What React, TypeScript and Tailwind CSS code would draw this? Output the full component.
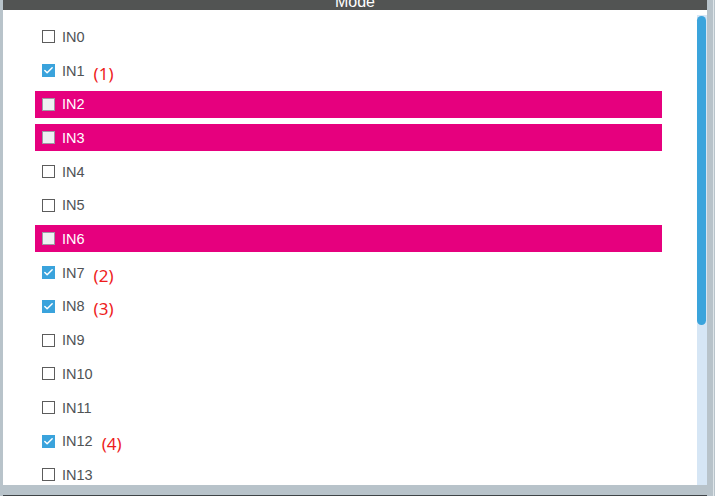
import { Check } from "lucide-react";

type Row = { name: string; checked?: boolean; hl?: boolean; tag?: string };

const rows: Row[] = [
  { name: "IN0" },
  { name: "IN1", checked: true, tag: "(1)" },
  { name: "IN2", hl: true },
  { name: "IN3", hl: true },
  { name: "IN4" },
  { name: "IN5" },
  { name: "IN6", hl: true },
  { name: "IN7", checked: true, tag: "(2)" },
  { name: "IN8", checked: true, tag: "(3)" },
  { name: "IN9" },
  { name: "IN10" },
  { name: "IN11" },
  { name: "IN12", checked: true, tag: "(4)" },
  { name: "IN13" },
];

const Box = ({ checked, hl }: { checked?: boolean; hl?: boolean }) => {
  if (checked) {
    return (
      <div className="flex items-center justify-center w-[13px] h-[13px] bg-[#3aa3dc]">
        <Check size={11} strokeWidth={3.2} color="#ffffff" />
      </div>
    );
  }
  if (hl) {
    return <div className="w-[13px] h-[13px] bg-[#eef0f2] border-[1.5px] border-[#9b9ba3]" />;
  }
  return <div className="w-[13px] h-[13px] bg-white border-[1.5px] border-[#5c5c5c]" />;
};

const App = () => {
  return (
    <div className="relative w-[715px] h-[496px] bg-[#b8c3ca] overflow-hidden font-['Liberation_Sans',Arial,sans-serif]">
      <div className="flex h-full">
        <div className="w-[3px]" />
        <div className="flex flex-col w-[704px]">
          <div className="h-[10px] bg-[#525453] overflow-hidden flex justify-center">
            <span className="-mt-[6px] leading-[16px] text-[16px] text-white">Mode</span>
          </div>
          <div className="flex h-[475px] bg-white overflow-hidden">
            <div className="flex-1 pl-[32px] pr-[35px] pt-[10px]">
              {rows.map((r) => (
                <div key={r.name} className="h-[33.7px] flex items-center">
                  <div
                    className={`flex items-center w-full h-[27px] pl-[7px] ${r.hl ? "bg-[#e6007e]" : ""}`}
                  >
                    <Box checked={r.checked} hl={r.hl} />
                    <span
                      className={`ml-[7px] mt-[2px] text-[14.5px] ${r.hl ? "text-white" : "text-[#505356]"}`}
                    >
                      {r.name}
                    </span>
                    {r.tag && (
                      <span className="ml-[9px] mt-[5px] text-[17px] text-[#ee1c1c] font-['Noto_Sans',sans-serif] leading-none">
                        {r.tag}
                      </span>
                    )}
                  </div>
                </div>
              ))}
            </div>
            <div className="w-[10px] pt-[5px] flex flex-col">
              <div className="flex-1 bg-[#d6e6f5] flex flex-col">
                <div className="mt-[1px] h-[309px] w-[9px] bg-[#3ba4dc] rounded-full" />
              </div>
            </div>
          </div>
          <div className="h-[10px]" />
          <div className="h-[1px] bg-[#3f4447]" />
        </div>
        <div className="flex w-[8px]">
          <div className="w-[6px]" />
          <div className="w-[1px] bg-[#dfe6ea]" />
        </div>
      </div>
    </div>
  );
};

export default App;
